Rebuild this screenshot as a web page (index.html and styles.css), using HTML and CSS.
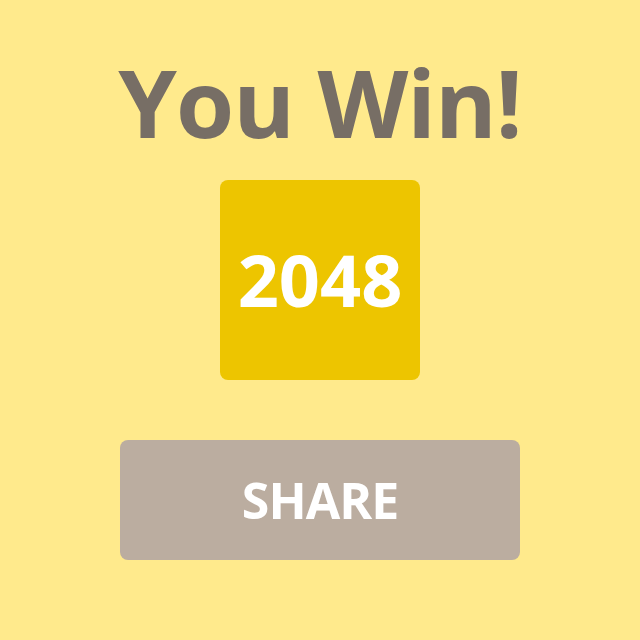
FILE: index.html
```html
<!DOCTYPE html>
<html lang="en">
<head>
  <meta charset="UTF-8">
  <meta name="viewport" content="width=device-width, initial-scale=1">
  <title>2048 - You Win!</title>
  <link rel="stylesheet" href="styles.css">
</head>
<body>

<main class="win">
  <h1 class="win-title">You Win!</h1>
  <div class="tile tile-2048">2048</div>
  <button class="share" type="button">SHARE</button>
</main>

</body>
</html>
```

FILE: styles.css
```css
*, *:after, *:before {
  box-sizing: border-box;
}
html, body {
  height: 100%;
}
body {
  background: #FFEA8C;
  color: #776E65;
  font-family: "Open Sans", "Noto Sans", sans-serif;
  margin: 0;
}
.win {
  align-items: center;
  display: flex;
  flex-direction: column;
  padding-top: 38px;
}
.win-title {
  font-size: 94px;
  font-weight: 700;
  letter-spacing: -1px;
  line-height: 129px;
  margin: 0;
}
.tile {
  align-items: center;
  border-radius: 8px;
  color: #FFF;
  display: flex;
  font-size: 72px;
  font-weight: 700;
  height: 200px;
  justify-content: center;
  margin-top: 13px;
  padding-bottom: 2px;
  width: 200px;
}
.tile-2048 {
  background: #EDC500;
}
.share {
  background: #BBADA0;
  border: 0;
  border-radius: 8px;
  color: #FFF;
  cursor: pointer;
  font-family: inherit;
  font-size: 50px;
  font-weight: 700;
  height: 120px;
  letter-spacing: -1px;
  margin-top: 60px;
  width: 400px;
  -webkit-appearance: none;
}
```
